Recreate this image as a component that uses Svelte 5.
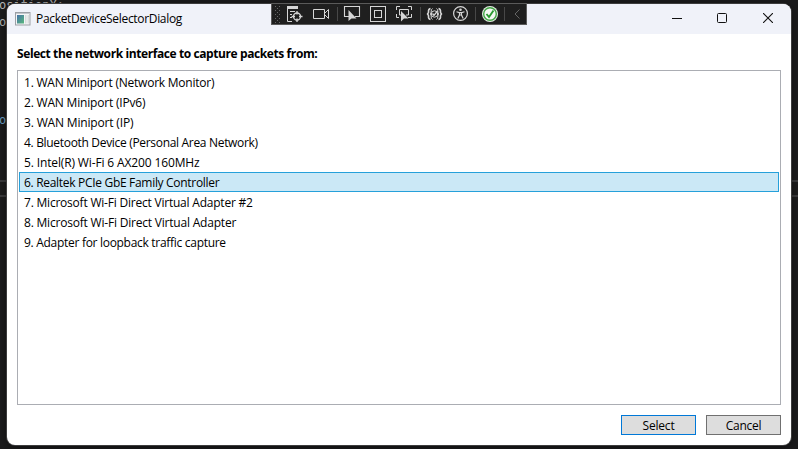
<script>
  const devices = [
    { name: 'WAN Miniport (Network Monitor)', width: 190.3 },
    { name: 'WAN Miniport (IPv6)', width: 121.3 },
    { name: 'WAN Miniport (IP)', width: 109.3 },
    { name: 'Bluetooth Device (Personal Area Network)', width: 233.8 },
    { name: 'Intel(R) Wi-Fi 6 AX200 160MHz', width: 175.5 },
    { name: 'Realtek PCIe GbE Family Controller', width: 195.3 },
    { name: 'Microsoft Wi-Fi Direct Virtual Adapter #2', width: 228.7 },
    { name: 'Microsoft Wi-Fi Direct Virtual Adapter', width: 212.2 },
    { name: 'Adapter for loopback traffic capture', width: 201.8 }
  ];
  let selected = $state(5);

  // Tracks a label's letters so that it fills the given width.
  function fit(node, width) {
    const natural = node.getBoundingClientRect().width;
    node.style.letterSpacing = `${(width - natural) / node.textContent.length}px`;
  }
</script>

<div class="desktop">
  <div class="code top">ositionX:</div>
  <div class="code second">os</div>
  <div class="code third">os</div>
  <div class="rules"></div>

  <section class="dialog">
    <header>
      <svg class="appicon" width="16" height="14" viewBox="0 0 16 14">
        <defs>
          <linearGradient id="pane" x1="0" y1="0" x2="1" y2="1">
            <stop offset="0" stop-color="#4672a8" />
            <stop offset="1" stop-color="#58b87c" />
          </linearGradient>
        </defs>
        <rect x=".5" y=".5" width="14.5" height="12.5" fill="#f4f5f6" stroke="#9b9fa5" />
        <path d="M1 1.5H15" stroke="#c3c7cc" />
        <rect x="2" y="3" width="7" height="8.5" fill="url(#pane)" />
        <path d="M10 3h1.5v8.5H10zM12.5 3H14v8.5h-1.5z" fill="#d8dcdc" />
      </svg>
      <h1><span use:fit={146}>PacketDeviceSelectorDialog</span></h1>
      <div class="controls">
        <svg width="10" height="10" viewBox="0 0 10 10"><path d="M0 5.5H10" stroke="#111" /></svg>
        <svg width="10" height="10" viewBox="0 0 10 10"><rect x=".5" y=".5" width="9" height="9" rx="1" fill="none" stroke="#111" /></svg>
        <svg class="close" width="10" height="10" viewBox="0 0 10 10"><path d="M0 0L10 10M10 0L0 10" stroke="#111" stroke-width="1.1" /></svg>
      </div>
    </header>
    <main>
      <p class="prompt"><span use:fit={300.3}>Select the network interface to capture packets from:</span></p>
      <ul>
        {#each devices as device, i}
          <li class:selected={i === selected}>
            <button class="row" onclick={() => (selected = i)}><span use:fit={device.width}>{i + 1}. {device.name}</span></button>
          </li>
        {/each}
      </ul>
      <footer>
        <button class="action primary"><span use:fit={32}>Select</span></button>
        <button class="action"><span use:fit={35.5}>Cancel</span></button>
      </footer>
    </main>
  </section>

  <div class="toolbar">
    <svg width="256" height="22" viewBox="0 0 256 22" fill="none" stroke="#d6d6d6">
      <g stroke="#666" stroke-dasharray="1 3">
        <path d="M4.5 3V20M8.5 3V20" />
        <path d="M6.5 5V20" />
      </g>
      <!-- live visual tree -->
      <path d="M16 4.5H27" stroke-width="3" />
      <path d="M16.5 4V18.5H21M19 8.5H24M19 11.5H21M19 14.5H21" />
      <circle cx="26" cy="13.5" r="3.5" stroke-width="1.3" />
      <path d="M26 8v3.500M26 15.500v3.500M20.500 13.500h3.500M28 13.500h3.500" stroke-width="1.3" />
      <!-- camera -->
      <path d="M42.500 6.500H53.500V15.500H42.500ZM54 10L57.500 6.500V15.500L54 12" />
      <path d="M66.500 4V18" stroke="#484848" />
      <!-- select element -->
      <path d="M79 13.500H73.500V3.500H88.500V13.500H84" stroke-width="1.1" />
      <path d="M77.500 7V18L80.500 15.500L85.500 15.400Z" fill="#d6d6d6" stroke="none" />
      <!-- layout adorners -->
      <rect x="99.500" y="3.500" width="15" height="15" />
      <rect x="103.500" y="7.500" width="7" height="7" />
      <!-- track focus -->
      <path d="M125.500 7V3.500H129M137 3.500H140.500V7M140.500 11V14.500H137M128 14.500H125.500V11" />
      <path d="M130 12H128.500V6.500H137.500V12H135" />
      <path d="M130 8V18.500L133 15.500H137.500Z" fill="#d6d6d6" stroke="none" />
      <path d="M149.500 4V18M204.500 4V18M233.500 4V18" stroke="#484848" />
      <!-- binding failures -->
      <path d="M159.500 5.500Q157 6 157.500 9.500L156.500 11L157.500 12.500Q157 16 159.500 16.500M167.500 5.500Q170 6 169.500 9.500L170.500 11L169.500 12.500Q170 16 167.500 16.500" stroke-width="1.500" />
      <path d="M161.500 5.500Q160 6 160 9.500L159.500 11L160 12.500Q160 16 161.500 16.500M165.500 5.500Q167 6 167 9.500L167.500 11L167 12.500Q167 16 165.500 16.500" />
      <circle cx="163.500" cy="11" r="3.200" />
      <path d="M161.500 10.500L163 12.500L166.500 8" stroke-width="1.300" />
      <!-- accessibility -->
      <circle cx="189.500" cy="10.500" r="6.900" stroke-width="1.200" />
      <circle cx="189.500" cy="6.800" r="1.300" fill="#d6d6d6" stroke="none" />
      <path d="M185.500 8.800L188.500 9.700V12L186.800 15.500M193.500 8.800L190.500 9.700V12L192.200 15.500M188.500 9.700H190.500M188.500 12H190.500" stroke-width="1.200" />
      <!-- hot reload -->
      <circle cx="219" cy="11" r="8" fill="#e4eee3" stroke="none" />
      <circle cx="219" cy="11" r="6.300" fill="#f4f8f3" stroke="#43a447" stroke-width="1.400" />
      <path d="M215.500 11L218 14L222.500 7.500" stroke="#299b30" stroke-width="1.900" />
      <path d="M248.500 6.500L244 11L248.500 15.500" stroke="#666" />
    </svg>
  </div>
</div>

<style>
  :global(body) { margin: 0; overflow: hidden; }
  .desktop {
    position: relative;
    width: 798px;
    height: 449px;
    box-sizing: border-box;
    padding: 4px 7px;
    overflow: hidden;
    background: #1b1b1c;
    font: 12px/16px "Open Sans", "Noto Sans", sans-serif;
    color: #000;
  }
  .code {
    position: absolute;
    left: -1px;
    font: 12px/14px "DejaVu Sans Mono", monospace;
    color: #b4b4b4;
  }
  .top { top: -2px; }
  .second { top: 15px; }
  .third { top: 113px; color: #6d9fc4; }
  .rules {
    position: absolute;
    left: 0;
    top: 180px;
    width: 798px;
    height: 13px;
    border-top: 2px solid #39393b;
    border-bottom: 2px solid #39393b;
  }
  .dialog {
    position: relative;
    display: flex;
    flex-direction: column;
    width: 784px;
    height: 441px;
    border-radius: 8px;
    background: #fff;
    box-shadow: 0 0 0 1px #3c3c3d, 0 2px 8px #0008;
    overflow: hidden;
  }
  header {
    display: flex;
    align-items: center;
    height: 30px;
    flex: none;
    padding: 0 18px 0 8px;
    background: #f0f2f9;
  }
  h1 { margin: 0 0 0 5px; font-size: 12px; font-weight: 400; line-height: 16px; }
  span { display: inline-block; white-space: pre; }
  .controls { display: flex; gap: 35px; margin-left: auto; padding-bottom: 2px; }
  .controls svg { display: block; }
  .controls .close { margin-left: 1px; }
  main { flex: 1; display: flex; flex-direction: column; padding: 12px 10px 10px; }
  .prompt { margin: 0; height: 24px; line-height: 16px; font-weight: 700; }
  ul {
    height: 335px;
    box-sizing: border-box;
    margin: 0;
    padding: 1px;
    border: 1px solid #abadb3;
    list-style: none;
  }
  li { box-sizing: border-box; height: 20px; border: 1px solid transparent; }
  li.selected { background: #cbe8f6; border-color: #26a0da; }
  .row {
    display: block;
    width: 100%;
    height: 18px;
    padding: 1px 4px 0;
    border: 0;
    background: none;
    font: inherit;
    line-height: 18px;
    color: inherit;
    text-align: left;
  }
  footer { display: flex; justify-content: flex-end; gap: 10px; margin-top: 10px; }
  .action {
    width: 75px;
    height: 20px;
    box-sizing: border-box;
    padding: 2px 0 0;
    border: 1px solid #707070;
    background: #ddd;
    font: inherit;
    line-height: 16px;
    color: inherit;
  }
  .primary { border-color: #0078d7; }
  .toolbar {
    position: absolute;
    left: 271px;
    top: 3px;
    width: 256px;
    height: 22px;
    box-sizing: border-box;
    border: 1px solid #5a5a5a;
    background: #1f1f1f;
  }
  .toolbar svg { display: block; margin: -1px; }
</style>
